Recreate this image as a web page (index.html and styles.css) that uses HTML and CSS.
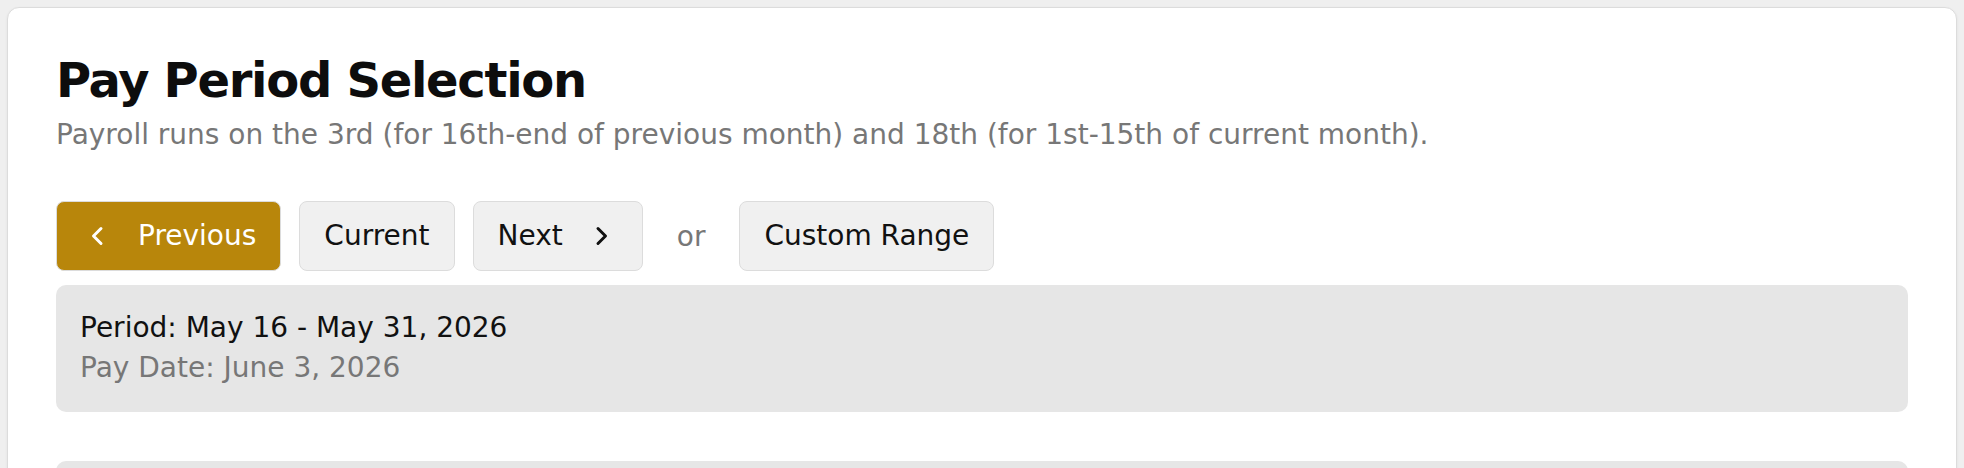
FILE: index.html
```html
<!DOCTYPE html>
<html lang="en">
<head>
<meta charset="utf-8">
<title>Pay Period Selection</title>
<link rel="stylesheet" href="styles.css">
</head>
<body>
<div class="page">
  <section class="card">
    <h1 class="title">Pay Period Selection</h1>
    <p class="subtitle">Payroll runs on the 3rd (for 16th-end of previous month) and 18th (for 1st-15th of current month).</p>
    <div class="controls">
      <button class="btn btn-primary" type="button">
        <svg class="chev" viewBox="0 0 32 32" aria-hidden="true"><path d="M20 8.5 L12.5 16 L20 23.5"/></svg>
        <span>Previous</span>
      </button>
      <button class="btn" type="button"><span>Current</span></button>
      <button class="btn btn-next" type="button">
        <span>Next</span>
        <svg class="chev" viewBox="0 0 32 32" aria-hidden="true"><path d="M12 8.5 L19.5 16 L12 23.5"/></svg>
      </button>
      <span class="or">or</span>
      <button class="btn" type="button"><span>Custom Range</span></button>
    </div>
    <div class="period">
      <div class="period-line">Period: May 16 - May 31, 2026</div>
      <div class="period-line muted">Pay Date: June 3, 2026</div>
    </div>
    <div class="panel"></div>
  </section>
</div>
</body>
</html>
```
FILE: styles.css
```css
* { box-sizing: border-box; }
html, body { margin: 0; padding: 0; }
body {
  background: #efefef;
  font-family: "DejaVu Sans", Verdana, sans-serif;
  color: #111;
}
.page {
  padding: 7px 7px 0;
  height: 468px;
  overflow: hidden;
}
.card {
  background: #fff;
  border: 1px solid #dcdcdc;
  border-radius: 12px;
  box-shadow: 0 1px 3px rgba(0,0,0,0.06);
  padding: 44px 48px 40px;
}
.title {
  margin: 0 0 10px;
  font-size: 48px;
  line-height: 56px;
  font-weight: bold;
  letter-spacing: -1.3px;
  color: #0d0d0d;
}
.subtitle {
  margin: 0;
  font-size: 28px;
  line-height: 33px;
  color: #777;
}
.controls {
  margin-top: 50px;
  display: flex;
  align-items: center;
  gap: 18px;
}
.btn {
  display: inline-flex;
  align-items: center;
  gap: 25px;
  height: 70px;
  padding: 0 24px;
  border: 1px solid #dcdcdc;
  border-radius: 8px;
  background: #f0f0f0;
  color: #111;
  font-family: inherit;
  font-size: 28px;
  line-height: 32px;
}
.btn-next { gap: 23px; }
.btn-primary {
  background: #b8860b;
  color: #fff;
}
.chev {
  width: 32px;
  height: 32px;
  flex: none;
}
.chev path {
  fill: none;
  stroke: currentColor;
  stroke-width: 3;
  stroke-linecap: round;
  stroke-linejoin: round;
}
.or {
  margin: 0 16px;
  font-size: 28px;
  color: #777;
}
.period {
  margin-top: 14px;
  background: #e6e6e6;
  border-radius: 10px;
  padding: 23px 24px 24px;
}
.period-line {
  font-size: 28px;
  line-height: 40px;
  color: #111;
}
.period-line.muted { color: #777; }
.panel {
  margin-top: 49px;
  height: 140px;
  background: #e6e6e6;
  border-radius: 10px;
}
```
